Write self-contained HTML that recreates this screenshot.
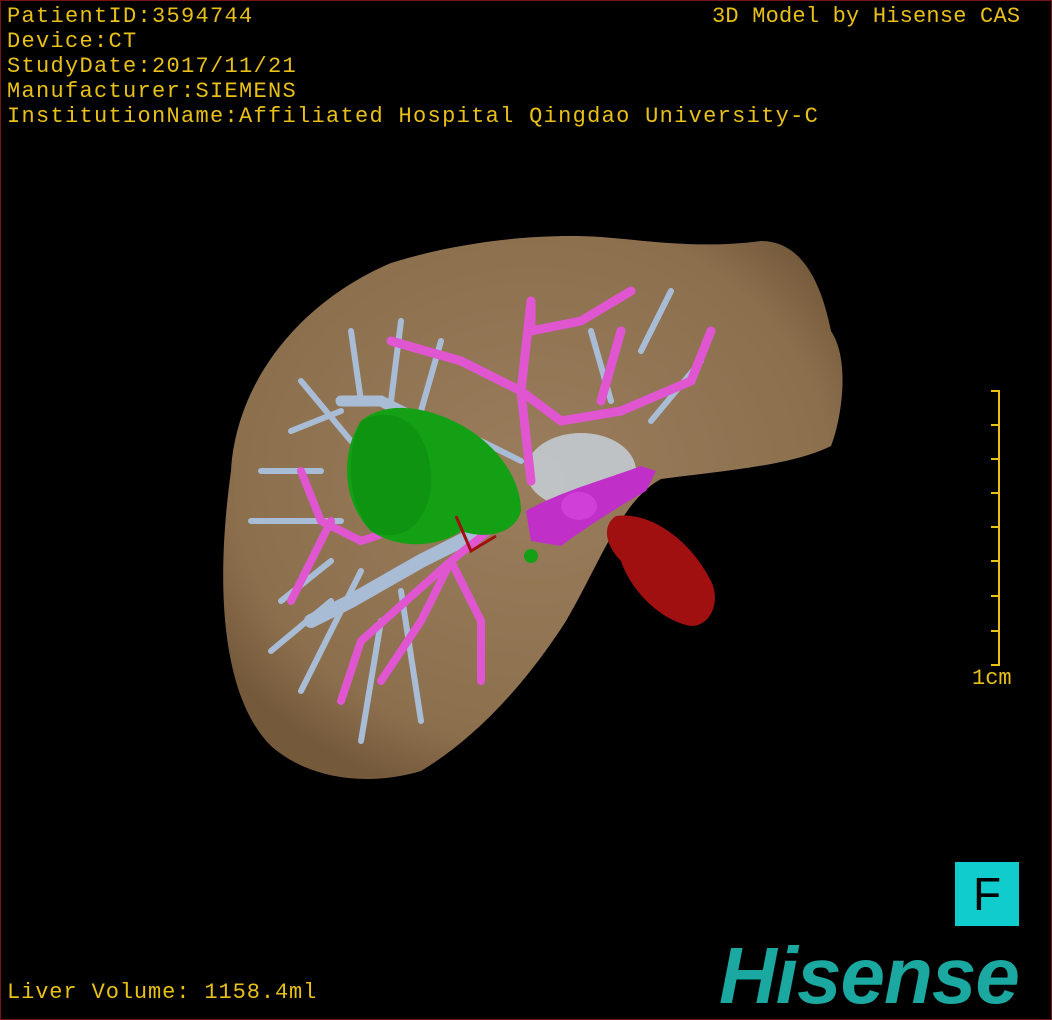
<!DOCTYPE html>
<html><head><meta charset="utf-8"><style>
html,body{margin:0;padding:0;background:#000;}
#c{position:relative;width:1050px;height:1018px;border:1px solid #7a1414;background:#000;overflow:hidden;font-family:"Liberation Mono","Noto Sans CJK SC",monospace;color:#e8c018;}
.t{position:absolute;font-size:22px;line-height:25px;white-space:pre;letter-spacing:1.3px;}
</style></head><body><div id="c">
<div class="t" style="left:6px;top:3px">PatientID:3594744<br>Device:CT<br>StudyDate:2017/11/21<br>Manufacturer:SIEMENS<br>InstitutionName:Affiliated Hospital Qingdao University-C</div>
<div class="t" style="left:711px;top:3px;letter-spacing:0.2px">3D Model by Hisense CAS</div>
<div class="t" style="left:6px;top:979px;letter-spacing:0.9px">Liver Volume: 1158.4ml</div>
<div class="t" style="left:971px;top:665px;letter-spacing:0">1cm</div>
<svg width="1050" height="1018" style="position:absolute;left:0;top:0">
<defs><radialGradient id="g" cx="0.5" cy="0.45" r="0.6"><stop offset="0" stop-color="#9a7d5c"/><stop offset="0.8" stop-color="#8c704e"/><stop offset="1" stop-color="#74593b"/></radialGradient></defs>
<path d="M230,470 C235,380 300,300 390,262 C460,240 540,232 600,236 C650,240 700,248 760,240 C800,240 820,280 830,330 C850,360 840,420 830,445 C790,465 720,470 660,478 C620,500 600,560 565,620 C520,690 470,740 420,770 C370,785 310,780 270,745 C225,700 212,600 230,470 Z" fill="url(#g)"/>
<g stroke="#a9bcd6" stroke-linecap="round" fill="none">
<path d="M340,410 L290,430 M330,600 L270,650 M360,570 L300,690 M380,620 L360,740 M400,590 L420,720 M340,520 L250,520 M320,470 L260,470 M350,440 L300,380 M360,400 L350,330 M390,400 L400,320 M420,410 L440,340 M640,350 L670,290 M610,400 L590,330 M650,420 L700,360 M520,460 L480,440 M330,560 L280,600" stroke-width="6"/>
<path d="M500,520 L420,560 L350,600 L310,620" stroke-width="14"/>
<path d="M440,430 L380,400 L340,400 M470,440 L420,470" stroke-width="11"/>
</g>
<ellipse cx="580" cy="470" rx="55" ry="38" fill="#c8d4e0" opacity="0.8"/>
<g stroke="#e055d0" stroke-linecap="round" fill="none">
<path d="M530,480 L520,390 L460,360 L390,340 M520,390 L530,300 M520,390 L560,420 L620,410 L690,380 L710,330 M530,300 L530,330 L580,320 L630,290 M600,400 L620,330" stroke-width="9"/>
<path d="M500,520 L450,560 L420,620 L380,680 M450,560 L480,620 L480,680 M450,560 L360,640 L340,700 M420,520 L360,540 L320,520 L300,470 M330,520 L290,600" stroke-width="8"/>
</g>
<path d="M360,420 C390,395 440,410 470,430 C500,450 520,480 520,510 C515,530 490,540 460,530 C440,545 400,550 370,530 C340,500 340,450 360,420 Z" fill="#14a014"/>
<path d="M360,420 C400,400 430,430 430,480 C430,520 400,545 370,530 C345,500 345,450 360,420 Z" fill="#0e9410"/>
<circle cx="530" cy="555" r="7" fill="#14a014"/>
<path d="M525,510 C560,490 600,480 640,465 L655,470 L645,490 C610,510 580,530 560,545 L530,540 Z" fill="#c030c8"/>
<ellipse cx="578" cy="505" rx="18" ry="14" fill="#d040d8"/>
<path d="M615,515 C650,510 690,540 710,580 C720,600 710,625 690,625 C660,620 630,590 620,560 C605,545 600,525 615,515 Z" fill="#a01010"/>
<path d="M455,515 L470,550 L495,535" stroke="#a01010" stroke-width="3" fill="none"/>
<g stroke="#e8c018" stroke-width="2"><path d="M998,389 L998,665"/>
<path d="M990,390 H998 M990,424 H998 M990,458 H998 M990,492 H998 M990,526 H998 M990,560 H998 M990,595 H998 M990,630 H998 M990,664 H998"/></g>
</svg>
<div style="position:absolute;left:954px;top:861px;width:64px;height:64px;background:#10cccc;color:#000;font-family:'Liberation Sans',sans-serif;font-size:46px;line-height:64px;text-align:center">F</div>
<div style="position:absolute;left:718px;top:935px;font-family:'Liberation Sans',sans-serif;font-weight:bold;font-style:italic;font-size:80px;line-height:80px;color:#1aa8a0;letter-spacing:-1px">Hisense</div>
</div></body></html>
